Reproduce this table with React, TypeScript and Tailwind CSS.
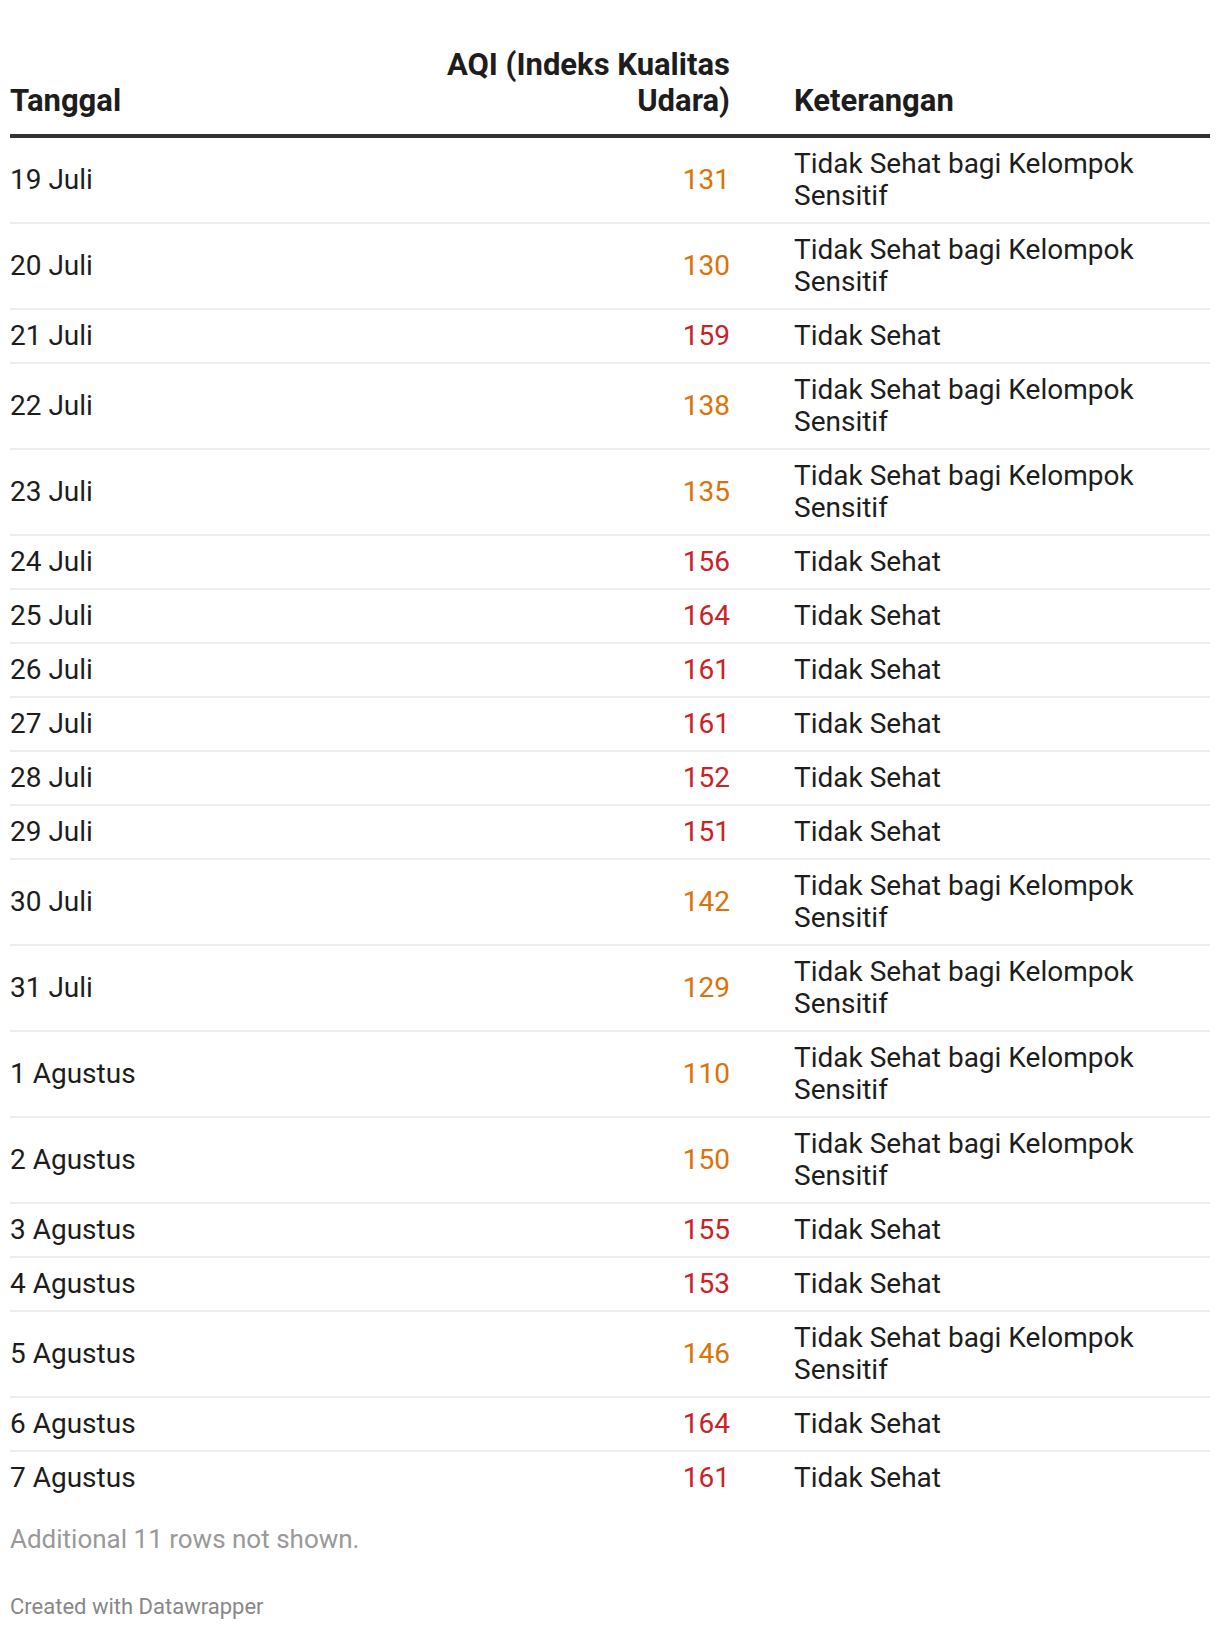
import React from "react"

type Row = { date: string; aqi: number; sensitive: boolean }

const rows: Row[] = [
    { date: "19 Juli", aqi: 131, sensitive: true },
    { date: "20 Juli", aqi: 130, sensitive: true },
    { date: "21 Juli", aqi: 159, sensitive: false },
    { date: "22 Juli", aqi: 138, sensitive: true },
    { date: "23 Juli", aqi: 135, sensitive: true },
    { date: "24 Juli", aqi: 156, sensitive: false },
    { date: "25 Juli", aqi: 164, sensitive: false },
    { date: "26 Juli", aqi: 161, sensitive: false },
    { date: "27 Juli", aqi: 161, sensitive: false },
    { date: "28 Juli", aqi: 152, sensitive: false },
    { date: "29 Juli", aqi: 151, sensitive: false },
    { date: "30 Juli", aqi: 142, sensitive: true },
    { date: "31 Juli", aqi: 129, sensitive: true },
    { date: "1 Agustus", aqi: 110, sensitive: true },
    { date: "2 Agustus", aqi: 150, sensitive: true },
    { date: "3 Agustus", aqi: 155, sensitive: false },
    { date: "4 Agustus", aqi: 153, sensitive: false },
    { date: "5 Agustus", aqi: 146, sensitive: true },
    { date: "6 Agustus", aqi: 164, sensitive: false },
    { date: "7 Agustus", aqi: 161, sensitive: false },
]

export default function App() {
    return (
        <div className="bg-white px-[10px] pt-[47px] pb-4 font-['Roboto',sans-serif] text-[#1d1d1d]">
            <table className="w-full border-collapse">
                <thead>
                    <tr className="border-b-4 border-[#333333] align-bottom">
                        <th className="w-[382px] pb-[15px] text-left text-[31px] leading-[36px] font-bold">Tanggal</th>
                        <th className="w-[370px] pb-[15px] pr-[32px] pl-[40px] text-right text-[31px] leading-[36px] font-bold">
                            AQI (Indeks Kualitas Udara)
                        </th>
                        <th className="pb-[15px] pl-[32px] text-left text-[31px] leading-[36px] font-bold">Keterangan</th>
                    </tr>
                </thead>
                <tbody>
                    {rows.map((r, i) => (
                        <tr
                            key={r.date}
                            className={i < rows.length - 1 ? "border-b-2 border-[#eeeeee] align-middle" : "align-middle"}
                        >
                            <td className="py-[10px] text-[28px] leading-[32px]">{r.date}</td>
                            <td
                                className={
                                    r.sensitive
                                        ? "py-[10px] pr-[32px] text-right text-[28px] leading-[32px] text-[#dc7208]"
                                        : "py-[10px] pr-[32px] text-right text-[28px] leading-[32px] text-[#cc2127]"
                                }
                            >
                                {r.aqi}
                            </td>
                            <td className="py-[10px] pl-[32px] text-[28px] leading-[32px]">
                                {r.sensitive ? "Tidak Sehat bagi Kelompok Sensitif" : "Tidak Sehat"}
                            </td>
                        </tr>
                    ))}
                </tbody>
            </table>

            {/* notes + credit line below the table */}
            <p className="mt-[19px] text-[26px] leading-[32px] text-[#999999]">Additional 11 rows not shown.</p>
            <p className="mt-[38px] text-[22px] leading-[28px] text-[#888888]">Created with Datawrapper</p>
        </div>
    )
}
